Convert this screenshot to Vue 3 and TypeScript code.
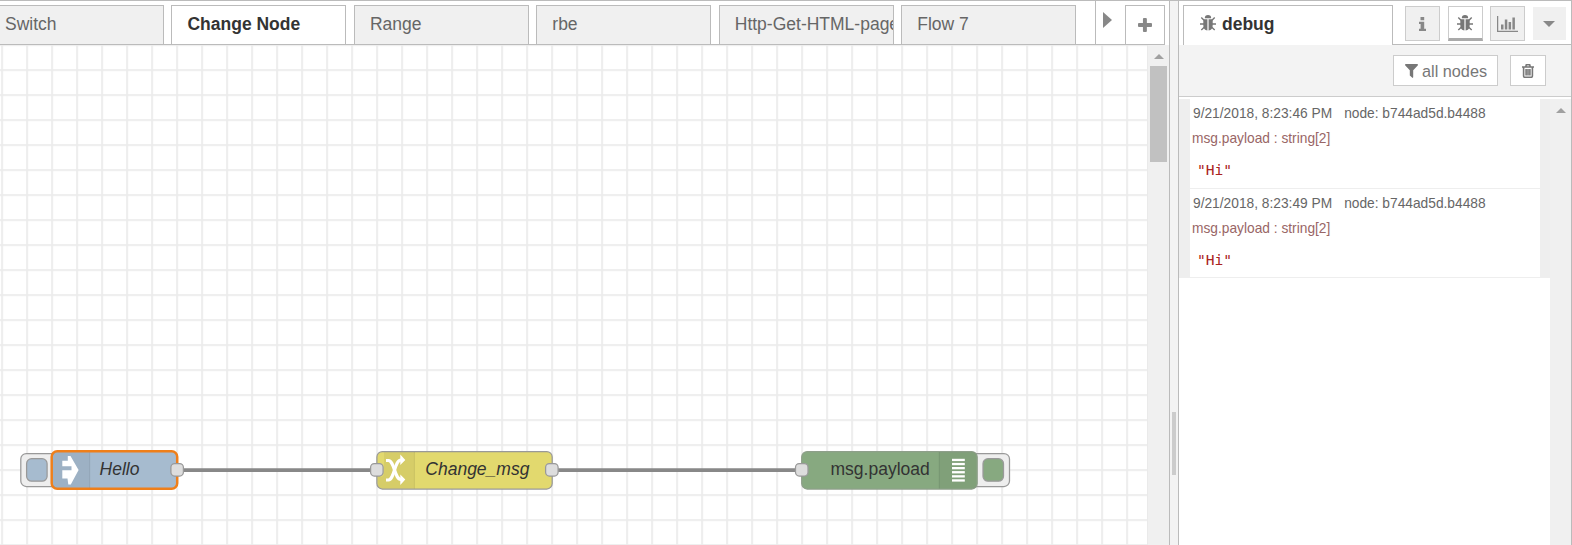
<script setup lang="ts">
interface Tab { label: string; active?: boolean }
interface Message { time: string; node: string; topic: string; value: string }

const tabs: Tab[] = [
  { label: 'Switch' },
  { label: 'Change Node', active: true },
  { label: 'Range' },
  { label: 'rbe' },
  { label: 'Http-Get-HTML-page' },
  { label: 'Flow 7' },
]

const messages: Message[] = [
  { time: '9/21/2018, 8:23:46 PM', node: 'node: b744ad5d.b4488', topic: 'msg.payload : string[2]', value: '"Hi"' },
  { time: '9/21/2018, 8:23:49 PM', node: 'node: b744ad5d.b4488', topic: 'msg.payload : string[2]', value: '"Hi"' },
]
const stripes = [0, 1, 2, 3, 4, 5]
</script>

<template>
  <div class="editor">
    <section class="workspace">
      <header class="tabbar">
        <div class="tabs">
          <div v-for="t in tabs" :key="t.label" class="tab" :class="{ active: t.active }"><span>{{ t.label }}</span></div>
        </div>
        <div class="scroll-right">
          <svg width="9" height="16" viewBox="0 0 9 16"><path d="M0 0L9 8L0 16Z" fill="#888" /></svg>
        </div>
        <div class="add">
          <svg width="14" height="14" viewBox="0 0 15 15"><path d="M5.300 1q0-1 1-1h2.200q1 0 1 1v4.400H14q1 0 1 1v2.200q0 1-1 1H9.500V14q0 1-1 1H6.300q-1 0-1-1V9.600H1q-1 0-1-1V6.400q0-1 1-1h4.300Z" fill="#888" /></svg>
        </div>
      </header>
      <div class="body">
        <svg class="canvas" width="1147" height="500" viewBox="0 45 1147 500">
          <defs>
            <pattern id="grid" x="1.2" y="44.2" width="25" height="25" patternUnits="userSpaceOnUse">
              <path d="M0 .9H25M.9 0V25" stroke="#ebebeb" stroke-width="1.8" />
            </pattern>
          </defs>
          <rect x="0" y="45" width="1147" height="500" fill="url(#grid)" />
          <path d="M177 470H377M552 470H802" stroke="#888" stroke-width="3.75" />

          <g class="outline">
            <rect x="20.800" y="453.500" width="40" height="33" rx="5.500" fill="#eee" />
            <rect x="26.600" y="458.700" width="20.500" height="22.500" rx="5" fill="#a6bbcf" />
            <rect x="51.700" y="451.300" width="125.500" height="37.500" rx="5.500" fill="#a6bbcf" class="selected" />
            <rect x="170.900" y="463.500" width="12.500" height="12.500" rx="3.700" fill="#ddd" />
          </g>
          <path d="M57 452.500H89.500V487.600H57Q53 487.600 53 483.500V456.500Q53 452.500 57 452.500Z" fill="#000" opacity=".05" />
          <path d="M89.700 452.500V487.600" stroke="#000" stroke-opacity=".1" />
          <path d="M62.300 460.800H67.800V456H70.500L78.600 470L70.800 484.500H68.300L67.500 478.500H62.300V470.200H71.500V466.300H62.300Z" fill="#fff" />
          <text x="99.600" y="475" class="label italic">Hello</text>

          <g class="outline">
            <rect x="376.900" y="451.500" width="175.300" height="37.500" rx="5.500" fill="#e2d96e" />
            <rect x="370.600" y="463.500" width="12.500" height="12.500" rx="3.700" fill="#ddd" />
            <rect x="545.600" y="463.500" width="12.500" height="12.500" rx="3.700" fill="#ddd" />
          </g>
          <path d="M384 452.200H414V488.300H382Q378 488.300 378 484V477H380Q384 477 384 473Z" fill="#000" opacity=".05" />
          <path d="M414.400 452V488.500" stroke="#000" stroke-opacity=".1" />
          <g fill="none" stroke="#fff" stroke-width="3.2">
            <path d="M386 460.500H388.500C394.500 461 394.500 479.500 401 479.500" />
            <path d="M386 480H388.500C394.500 479.500 394.500 460 401 460" />
          </g>
          <path d="M400.300 454.500L405.300 460L400.300 465ZM400.300 474.500L405.300 479.500L400.300 485Z" fill="#fff" />
          <text x="425.300" y="475" class="label italic">Change_msg</text>

          <g class="outline">
            <rect x="967" y="453.500" width="42.500" height="33" rx="5.500" fill="#eee" />
            <rect x="983" y="458.700" width="20.500" height="22.500" rx="5" fill="#87a980" />
            <rect x="801.700" y="451.500" width="175.500" height="37.500" rx="5.500" fill="#87a980" class="soft" />
            <rect x="795.500" y="463.500" width="12.500" height="12.500" rx="3.700" fill="#ddd" />
          </g>
          <path d="M939.500 452H972Q976.500 452 976.500 456.500V484Q976.500 488.500 972 488.500H939.500Z" fill="#000" opacity=".05" />
          <path d="M939.300 452V488.500" stroke="#000" stroke-opacity=".1" />
          <rect v-for="i in stripes" :key="i" x="952" :y="458.800 + i * 4.100" width="12.800" height="2.300" fill="#fff" />
          <text x="830.500" y="475" class="label">msg.payload</text>
        </svg>
        <div class="vscroll">
          <svg width="10" height="5" viewBox="0 0 10 5"><path d="M0 5L5 0L10 5Z" fill="#a0a0a0" /></svg>
          <div class="thumb"></div>
        </div>
      </div>
    </section>

    <div class="separator"><div class="grip"></div></div>

    <aside class="sidebar">
      <header class="side-tabs">
        <div class="side-tab">
          <svg class="bug" width="16" height="16" viewBox="0 0 16 16"><use href="#bug-shape" /></svg>
          <span>debug</span>
        </div>
        <div class="side-buttons">
          <div class="sbtn"><svg width="7" height="14" viewBox="0 0 7 14"><path d="M1.500 0H5.200V3.200H1.500ZM0 4.800H5.200V11.800H7V14H0V11.800H1.600V7H0Z" fill="#888" /></svg></div>
          <div class="sbtn on">
            <svg width="16" height="16" viewBox="0 0 16 16">
              <g id="bug-shape">
                <path d="M4.800 3.300A3.200 3.200 0 0 1 11.200 3.300Z" fill="#777" />
                <path d="M3.300 4.300H7.400V15.500Q3.300 15 3.300 10ZM8.600 4.300H12.700V10Q12.700 15 8.600 15.500Z" fill="#777" />
                <path d="M1.300 2.500L4 5.300M14.700 2.500L12 5.300M0 9H4M16 9H12M1.300 15L4.500 12M14.700 15L11.500 12" stroke="#777" stroke-width="1.400" fill="none" />
              </g>
            </svg>
          </div>
          <div class="sbtn"><svg width="21" height="16" viewBox="0 0 21 16"><path d="M.600 0V15.300H21" stroke="#888" stroke-width="1.300" fill="none" /><path d="M4 8.500H6.500V13.500H4ZM7.800 3.500H10.300V13.500H7.800ZM11.600 6H14.100V13.500H11.600ZM15.400 1.500H17.900V13.500H15.400Z" fill="#888" /></svg></div>
          <div class="sbtn plain"><svg width="12" height="6" viewBox="0 0 12 6"><path d="M0 0H12L6 6Z" fill="#888" /></svg></div>
        </div>
      </header>
      <div class="toolbar">
        <div class="tbtn filter">
          <svg width="13" height="14" viewBox="0 0 13 14"><path d="M.500 0H12.500Q13.300 .800 12.700 1.500L8.200 6.200V13.300L7.600 14L4.800 11.500V6.200L.300 1.500Q-.300 .800 .500 0Z" fill="#777" /></svg>
          <span>all nodes</span>
        </div>
        <div class="tbtn trash">
          <svg width="12" height="14" viewBox="0 0 12 14"><path d="M0 3H12M3.700 3L4.300 .800H7.700L8.300 3M1.600 3V12Q1.600 13.300 2.800 13.300H9.200Q10.400 13.300 10.400 12V3M4.100 5V11.500M6 5V11.500M7.900 5V11.500" fill="none" stroke="#777" stroke-width="1.600" /></svg>
        </div>
      </div>
      <div class="debug">
        <div class="list">
          <article v-for="m in messages" :key="m.time" class="msg">
            <div class="meta"><span>{{ m.time }}</span><span>{{ m.node }}</span></div>
            <div class="topic">{{ m.topic }}</div>
            <div class="value">{{ m.value }}</div>
          </article>
        </div>
        <div class="side-scroll"><svg width="10" height="5" viewBox="0 0 10 5"><path d="M0 5L5 0L10 5Z" fill="#a0a0a0" /></svg></div>
      </div>
    </aside>
  </div>
</template>

<style>
body { margin: 0; background: #f3f3f3; }
</style>
<style scoped>
* { box-sizing: border-box; }
svg { display: block; flex: none; }
.editor { display: flex; width: 1572px; height: 545px; overflow: hidden; font-family: "Liberation Sans", Arial, sans-serif; background: #f3f3f3; }
.workspace { width: 1170px; border-top: 1px solid #bbb; border-right: 1px solid #bbb; background: #fff; flex: none; }
.tabbar { display: flex; height: 44px; }
.tabs { display: flex; width: 1095px; height: 44px; padding-top: 4px; gap: 7.450px; border-bottom: 1px solid #bbb; overflow: hidden; flex: none; }
.tab { flex: none; width: 175px; height: 40px; border: 1px solid #bbb; background: #f0f0f0; color: #666; font-size: 17.500px; line-height: 36px; padding-left: 15px; white-space: nowrap; overflow: hidden; }
.tab:first-child { margin-left: -11px; }
.tab.active { background: #fff; color: #333; font-weight: bold; border-bottom-color: #fff; }
.scroll-right { width: 30px; border-left: 1px solid #bbb; border-bottom: 1px solid #bbb; padding: 11px 0 0 7px; }
.add { width: 40px; margin-top: 4px; border: 1px solid #bbb; padding: 12px 0 0 12px; }
.body { display: flex; height: 500px; }
.canvas { background: #fff; }
.outline rect { stroke: #999; stroke-width: 1.250px; }
.outline .selected { stroke: #ef7f1a; stroke-width: 2.500px; }
.outline .soft { stroke: #8e9f8a; }
.label { font-size: 17.500px; fill: #333; }
.italic { font-style: italic; }
.vscroll { width: 22px; background: #f0f0f0; border-left: 1px solid #eaeaea; padding: 9px 0 0 2px; }
.vscroll svg { margin-left: 4px; }
.thumb { width: 17px; height: 96px; margin-top: 7px; background: #c1c1c1; }
.separator { width: 8px; flex: none; border-top: 1px solid #bbb; padding: 411px 0 0 2px; }
.grip { width: 4px; height: 63px; background: #ccc; }
.sidebar { width: 394px; flex: none; border: solid #bbb; border-width: 1px 1px 0 1px; background: #fff; }
.side-tabs { display: flex; height: 44px; }
.side-tab { width: 210px; margin: 4px 0 0 4px; border: 1px solid #bbb; border-bottom: 0; display: flex; padding: 9px 0 0 16px; font-size: 17.500px; font-weight: bold; color: #333; line-height: 18px; gap: 6px; flex: none; }
.side-buttons { flex: 1; border-bottom: 1px solid #bbb; display: flex; padding: 5px 0 0 12px; gap: 7.500px; }
.sbtn { width: 35px; height: 35px; flex: none; border: 1px solid #ccc; background: #f0f0f0; display: flex; align-items: center; justify-content: center; }
.sbtn.on { background: #fff; border-bottom: 3px solid #aaa; }
.sbtn.plain { width: 33px; height: 33px; border: 0; margin-top: 1px; }
.toolbar { height: 52px; background: #f3f3f3; border-bottom: 1px solid #ccc; padding: 10px 0 0 214px; display: flex; gap: 12px; }
.tbtn { height: 31px; border: 1px solid #ccc; background: #fff; display: flex; align-items: center; color: #777; font-size: 16.250px; }
.tbtn span { padding-top: 1px; }
.tbtn svg { margin-top: 1px; }
.filter { width: 105px; padding-left: 11px; gap: 4px; }
.trash { width: 36px; justify-content: center; }
.debug { display: flex; height: 448px; padding-top: 2px; }
.list { width: 371px; flex: none; }
.msg { height: 89.500px; border: solid #eee; border-width: 0 10px 1px 11px; padding: 6px 0 0 3px; white-space: nowrap; }
.meta { display: flex; gap: 12px; font-size: 13.750px; line-height: 18px; color: #666; }
.topic { margin: 7px 0 0 -1px; font-size: 13.750px; line-height: 18px; color: #966; }
.value { margin: 12px 0 0 4px; font: 14.600px/20px "DejaVu Sans Mono", monospace; color: #a22; }
.side-scroll { flex: 1; background: #f0f0f0; padding: 9px 0 0 6px; }
</style>
